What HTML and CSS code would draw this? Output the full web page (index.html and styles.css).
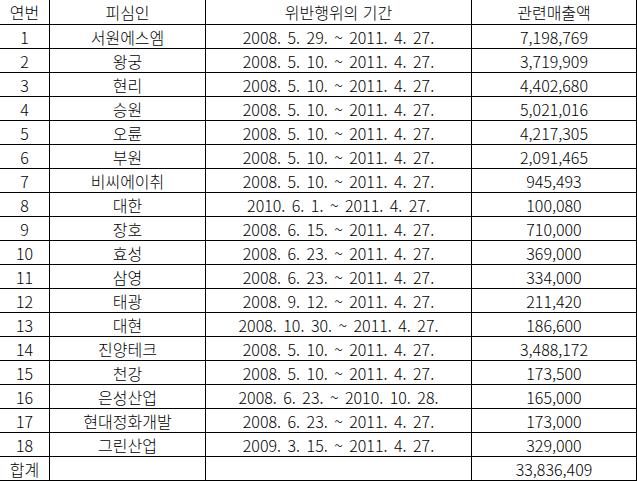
FILE: index.html
```html
<!DOCTYPE html>
<html lang="ko">
<head>
<meta charset="utf-8">
<link rel="stylesheet" href="styles.css">
</head>
<body>
<div class="grid">
  <div class="c hd">연번</div><div class="c hd">피심인</div><div class="c hd">위반행위의 기간</div><div class="c hd">관련매출액</div>
  <div class="c">1</div><div class="c">서원에스엠</div><div class="c d">2008. 5. 29. ~ 2011. 4. 27.</div><div class="c">7,198,769</div>
  <div class="c">2</div><div class="c">왕궁</div><div class="c d">2008. 5. 10. ~ 2011. 4. 27.</div><div class="c">3,719,909</div>
  <div class="c">3</div><div class="c">현리</div><div class="c d">2008. 5. 10. ~ 2011. 4. 27.</div><div class="c">4,402,680</div>
  <div class="c">4</div><div class="c">승원</div><div class="c d">2008. 5. 10. ~ 2011. 4. 27.</div><div class="c">5,021,016</div>
  <div class="c">5</div><div class="c">오륜</div><div class="c d">2008. 5. 10. ~ 2011. 4. 27.</div><div class="c">4,217,305</div>
  <div class="c">6</div><div class="c">부원</div><div class="c d">2008. 5. 10. ~ 2011. 4. 27.</div><div class="c">2,091,465</div>
  <div class="c">7</div><div class="c">비씨에이취</div><div class="c d">2008. 5. 10. ~ 2011. 4. 27.</div><div class="c">945,493</div>
  <div class="c">8</div><div class="c">대한</div><div class="c d">2010. 6. 1. ~ 2011. 4. 27.</div><div class="c">100,080</div>
  <div class="c">9</div><div class="c">장호</div><div class="c d">2008. 6. 15. ~ 2011. 4. 27.</div><div class="c">710,000</div>
  <div class="c">10</div><div class="c">효성</div><div class="c d">2008. 6. 23. ~ 2011. 4. 27.</div><div class="c">369,000</div>
  <div class="c">11</div><div class="c">삼영</div><div class="c d">2008. 6. 23. ~ 2011. 4. 27.</div><div class="c">334,000</div>
  <div class="c">12</div><div class="c">태광</div><div class="c d">2008. 9. 12. ~ 2011. 4. 27.</div><div class="c">211,420</div>
  <div class="c">13</div><div class="c">대현</div><div class="c d">2008. 10. 30. ~ 2011. 4. 27.</div><div class="c">186,600</div>
  <div class="c">14</div><div class="c">진양테크</div><div class="c d">2008. 5. 10. ~ 2011. 4. 27.</div><div class="c">3,488,172</div>
  <div class="c">15</div><div class="c">천강</div><div class="c d">2008. 5. 10. ~ 2011. 4. 27.</div><div class="c">173,500</div>
  <div class="c">16</div><div class="c">은성산업</div><div class="c d">2008. 6. 23. ~ 2010. 10. 28.</div><div class="c">165,000</div>
  <div class="c">17</div><div class="c">현대정화개발</div><div class="c d">2008. 6. 23. ~ 2011. 4. 27.</div><div class="c">173,000</div>
  <div class="c">18</div><div class="c">그린산업</div><div class="c d">2009. 3. 15. ~ 2011. 4. 27.</div><div class="c">329,000</div>
  <div class="c">합계</div><div class="c"></div><div class="c"></div><div class="c">33,836,409</div>
</div>
</body>
</html>
```

FILE: styles.css
```css
html, body {
  margin: 0;
  padding: 0;
  background: #ffffff;
}
.grid {
  display: grid;
  grid-template-columns: 50px 156px 266px 165px;
  grid-template-rows: 25px repeat(19, 24px);
  width: 637px;
  font-family: "Noto Sans CJK KR", "Noto Sans", sans-serif;
  font-size: 16px;
  font-weight: 300;
  color: #000;
}
.c {
  box-sizing: border-box;
  border-right: 1px solid #000;
  border-bottom: 1px solid #000;
  display: flex;
  align-items: center;
  justify-content: center;
  white-space: pre;
  line-height: 1;
  padding-top: 1px;
}
.hd {
  padding-top: 0;
}
.d {
  word-spacing: 2px;
}
```
